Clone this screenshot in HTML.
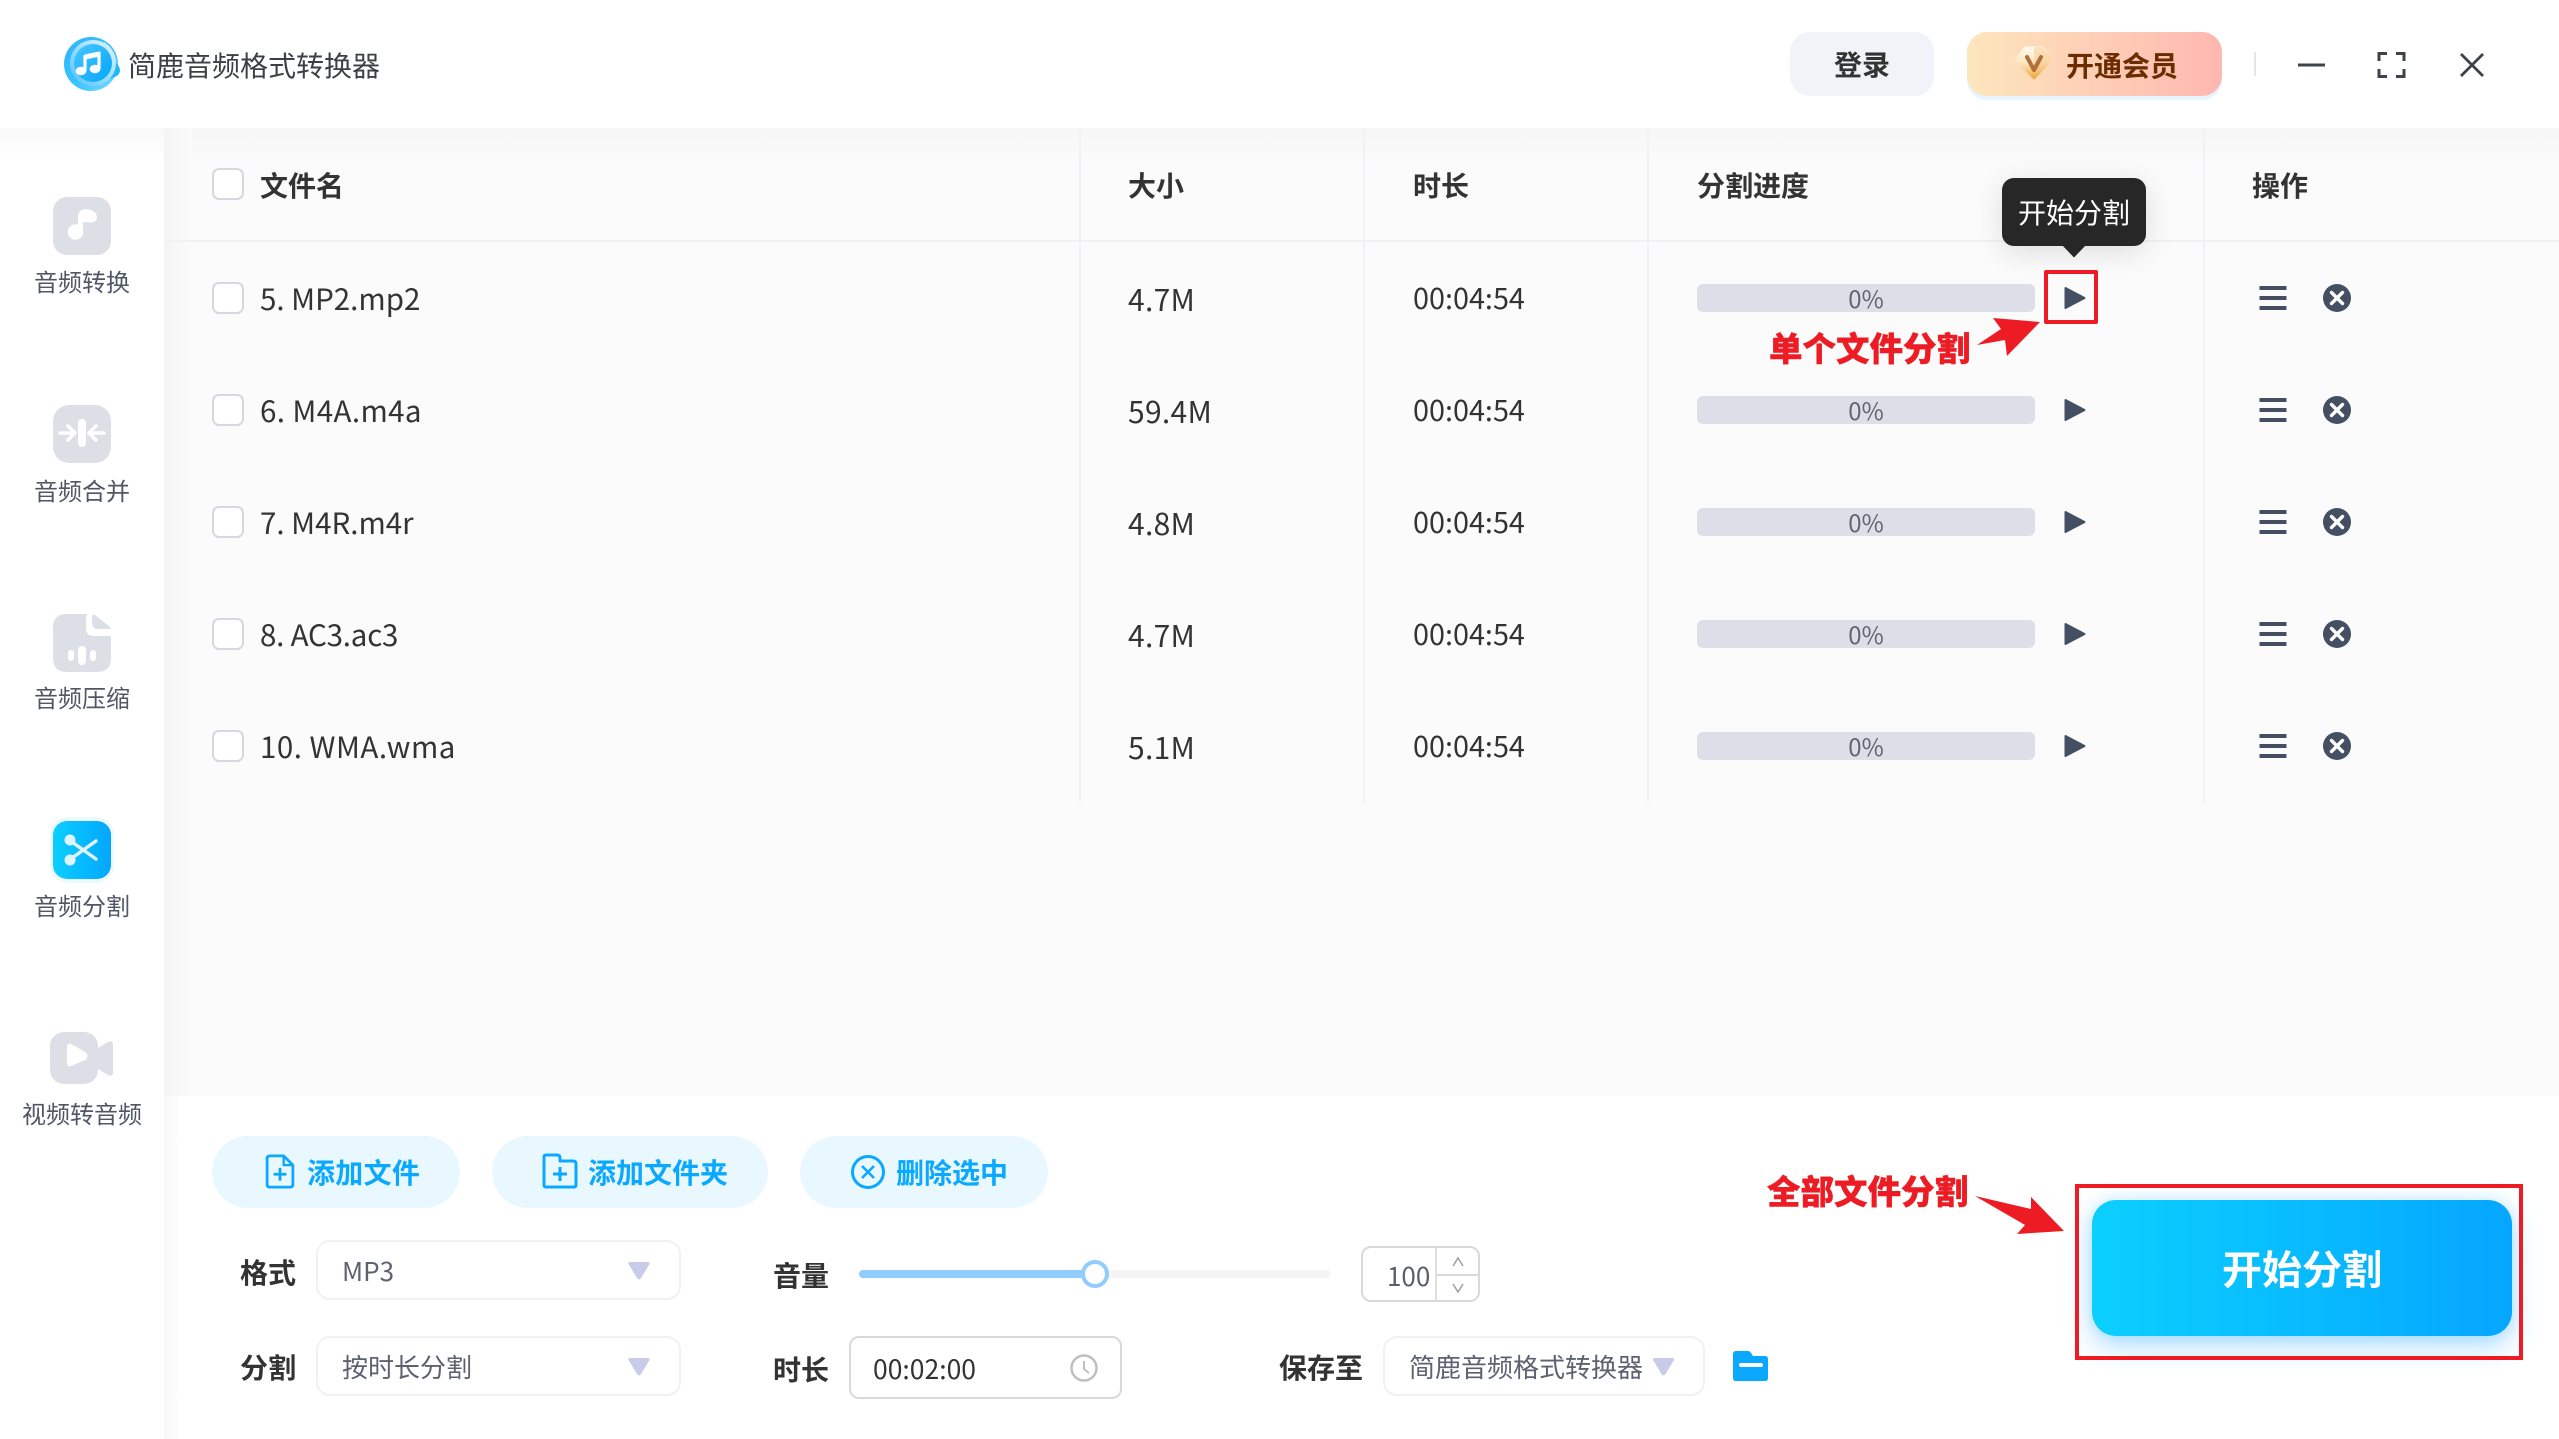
<!DOCTYPE html>
<html lang="zh">
<head>
<meta charset="utf-8">
<title>简鹿音频格式转换器</title>
<style>
html,body{margin:0;padding:0;width:2559px;height:1439px;overflow:hidden;background:#fff}
body{position:relative;font-family:"Noto Sans CJK SC","Liberation Sans",sans-serif;color:#333}
.a{position:absolute;white-space:nowrap}
.t{position:absolute;white-space:nowrap;line-height:40px;height:40px}
.fn{font-size:29.5px}.sz{font-size:30px}.tm{font-size:28.8px}
svg{position:absolute;overflow:visible}
.b{font-weight:700}
.cb{position:absolute;left:212px;width:32px;height:32px;box-sizing:border-box;border:2px solid #d5d8df;border-radius:7px;background:#fff}
.bar{position:absolute;left:1697px;width:338px;height:28px;background:#dcdfe7;border-radius:6px;text-align:center;font-size:24px;line-height:28px;color:#5f6672}
.vl{position:absolute;top:128px;width:2px;height:675px;background:#f1f2f5}
.nav{position:absolute;left:0;width:164px;text-align:center;font-size:24px;line-height:34px;color:#4f5766}
.pill{position:absolute;top:1136px;height:72px;border-radius:36px;background:#e9f8ff}
.pt{position:absolute;top:1152px;line-height:40px;font-size:28px;font-weight:700;color:#0aa8ff;white-space:nowrap}
.sel{position:absolute;box-sizing:border-box;border:2px solid #eff1f5;border-radius:14px;background:#fff;height:60px}
.seltxt{position:absolute;font-size:26px;line-height:40px;color:#5c6270;white-space:nowrap}
.lab{position:absolute;font-size:28px;font-weight:700;line-height:40px;white-space:nowrap;color:#333}
.red{position:absolute;font-size:33.500px;font-weight:900;line-height:40px;color:#ed1c24;white-space:nowrap;-webkit-text-stroke:.4px #ed1c24}
</style>
</head>
<body>
<!-- main background -->
<div class="a" style="left:164px;top:128px;width:2395px;height:968px;background:#fbfbfc"></div>
<div class="a" style="left:164px;top:128px;width:2395px;height:36px;background:linear-gradient(#f6f6f6,#fbfbfc)"></div>
<div class="a" style="left:164px;top:128px;width:28px;height:968px;background:linear-gradient(90deg,#f4f4f5,#fbfbfc)"></div>
<div class="a" style="left:0;top:128px;width:164px;height:30px;background:linear-gradient(#f8f8f8,#fff)"></div>
<div class="a" style="left:164px;top:1096px;width:2395px;height:343px;background:#fff"></div>
<div class="a" style="left:164px;top:1096px;width:16px;height:343px;background:linear-gradient(90deg,#f8f8f8,#fff)"></div>

<!-- header -->
<svg style="left:60px;top:32px" width="66" height="64" viewBox="60 32 66 64">
<defs>
<linearGradient id="lg" x1="0" y1="0" x2="1" y2="1"><stop offset="0" stop-color="#2fb4fb"/><stop offset=".55" stop-color="#37c4ff"/><stop offset="1" stop-color="#7fdcff"/></linearGradient>
<linearGradient id="lr" x1="1" y1="0" x2="0" y2="1"><stop offset="0" stop-color="#e9f7ff"/><stop offset="1" stop-color="#4fc2ff"/></linearGradient>
<linearGradient id="li" x1="0" y1="0" x2="1" y2="1"><stop offset="0" stop-color="#49c6ff"/><stop offset="1" stop-color="#02a6ff"/></linearGradient>
</defs>
<circle cx="91" cy="64" r="27" fill="url(#lg)"/>
<path d="M108 60q6 2 9 4 3 3 3 7-1 5-6 6l-6 3z" fill="#1cb8fb"/>
<path d="M104 42a27 27 0 0 1 12 18l-8 6z" fill="#dff3ff" opacity=".9"/>
<circle cx="93" cy="63" r="23" fill="url(#lr)"/>
<circle cx="93" cy="63" r="19" fill="url(#li)"/>
<path d="M85 70.500V56.500L99 53.500V68.500" fill="none" stroke="#fff" stroke-width="3.200"/>
<path d="M85 57 99 54" stroke="#fff" stroke-width="5"/>
<ellipse cx="81" cy="71" rx="5.400" ry="4.200" fill="#fff"/>
<ellipse cx="95" cy="69" rx="5.400" ry="4.200" fill="#fff"/>
</svg>
<div class="t" style="left:128px;top:45px;font-size:28px;color:#3c3f46">简鹿音频格式转换器</div>

<div class="a" style="left:1790px;top:32px;width:144px;height:64px;border-radius:20px;background:#f2f3f8;text-align:center;line-height:64px;font-size:28px;font-weight:700;color:#333">登录</div>
<div class="a" style="left:1967px;top:36px;width:255px;height:64px;border-radius:20px;background:#e6f4ff"></div>
<div class="a" style="left:1967px;top:32px;width:255px;height:64px;border-radius:20px;background:linear-gradient(90deg,#fde6bd,#ffb7b0)"></div>
<svg style="left:2015px;top:46px" width="38" height="34" viewBox="0 0 38 34">
<defs><linearGradient id="dm" x1="0" y1="0" x2="0" y2="1"><stop offset="0" stop-color="#fffaf0"/><stop offset=".5" stop-color="#fde7bf"/><stop offset="1" stop-color="#efa53a"/></linearGradient></defs>
<path d="M10 1H28L38 14 19 33 0 14Z" fill="url(#dm)" stroke="url(#dm)" stroke-width="1" stroke-linejoin="round"/>
<path d="M19 1H28L38 14 19 33Z" fill="#f2b468" opacity=".35"/>
<path d="M12 11 19 24 26 11" fill="none" stroke="#b0703a" stroke-width="4" stroke-linecap="round" stroke-linejoin="round"/>
</svg>
<div class="t" style="left:2066px;top:45px;font-size:28px;font-weight:700;color:#6b2d00">开通会员</div>
<div class="a" style="left:2254px;top:52px;width:2px;height:24px;background:#e4e5e8"></div>
<svg style="left:2290px;top:44px" width="210" height="44" viewBox="2290 44 210 44" fill="none" stroke="#3e424a" stroke-width="3">
<path d="M2298 65H2325"/>
<path d="M2387 53.500H2379V61M2396 53.500H2404V61M2379 69V76.500H2387M2404 69V76.500H2396"/>
<path d="M2461 54 2483 76M2483 54 2461 76" stroke-width="2.800"/>
</svg>

<!-- sidebar -->
<svg style="left:50px;top:190px" width="70" height="70" viewBox="50 190 70 70">
<rect x="53" y="197" width="58" height="58" rx="14" fill="#dcdfe6"/>
<circle cx="75.500" cy="232" r="7.800" fill="#fff"/>
<path d="M80.500 232V216" stroke="#fff" stroke-width="5"/>
<path d="M78 216Q79 209 86 209 96 210 97 217 97 222 91 222.500L83 222Z" fill="#fff"/>
</svg>
<div class="nav" style="top:264px">音频转换</div>

<svg style="left:50px;top:400px" width="70" height="70" viewBox="50 400 70 70">
<rect x="53" y="405" width="58" height="58" rx="16" fill="#dcdfe6"/>
<rect x="78" y="419" width="8" height="28" rx="4" fill="#fff"/>
<path d="M60 433H72M68 426l7 7-7 7" fill="none" stroke="#fff" stroke-width="3.500" stroke-linecap="round" stroke-linejoin="round"/>
<path d="M104 433H92M96 426l-7 7 7 7" fill="none" stroke="#fff" stroke-width="3.500" stroke-linecap="round" stroke-linejoin="round"/>
</svg>
<div class="nav" style="top:473px">音频合并</div>

<svg style="left:50px;top:610px" width="70" height="70" viewBox="50 610 70 70">
<path d="M67 614H88Q86 614 86 620V628Q86 636 94 636H111V658Q111 672 97 672H67Q53 672 53 658V628Q53 614 67 614Z" fill="#dcdfe6"/>
<path d="M92 615q1-1 3 0l15 12q2 2-1 2H98q-6 0-6-6z" fill="#dcdfe6"/>
<rect x="68" y="650" width="6" height="11" rx="3" fill="#fff"/>
<rect x="78" y="646" width="8" height="19" rx="4" fill="#fff"/>
<rect x="90" y="650" width="6" height="11" rx="3" fill="#fff"/>
</svg>
<div class="nav" style="top:680px">音频压缩</div>

<div class="a" style="left:50px;top:817px;width:64px;height:66px;border-radius:18px;background:#eef9ff"></div>
<svg style="left:50px;top:815px" width="70" height="70" viewBox="50 815 70 70">
<defs><linearGradient id="sc" x1="0" y1="0" x2="1" y2="0"><stop offset="0" stop-color="#0bcfff"/><stop offset="1" stop-color="#03a6ff"/></linearGradient></defs>
<rect x="53" y="821" width="58" height="58" rx="14" fill="url(#sc)"/>
<circle cx="70" cy="840" r="5.500" fill="#dff4ff"/>
<circle cx="70" cy="860" r="5.500" fill="#dff4ff"/>
<path d="M72 842 96 859M72 858 96 841" stroke="#dff4ff" stroke-width="3.500" stroke-linecap="round"/>
</svg>
<div class="nav" style="top:888px">音频分割</div>

<svg style="left:45px;top:1028px" width="75" height="60" viewBox="45 1028 75 60">
<rect x="50" y="1032" width="48" height="52" rx="14" fill="#dcdfe6"/>
<path d="M98 1048l10-6q5-2 5 3v27q0 5-5 3l-10-6z" fill="#dcdfe6"/>
<path d="M68 1047q0-3 3-2l14 8q3 3 0 6l-14 6q-3 1-3-2z" fill="#fff" stroke="#fff" stroke-width="2" stroke-linejoin="round"/>
</svg>
<div class="nav" style="top:1096px">视频转音频</div>

<!-- table -->
<div class="a" style="left:164px;top:240px;width:2395px;height:2px;background:#f0f2f6"></div>
<div class="vl" style="left:1079px"></div>
<div class="vl" style="left:1363px"></div>
<div class="vl" style="left:1647px"></div>
<div class="vl" style="left:2203px"></div>

<div class="cb" style="top:168px"></div>
<div class="t b" style="left:260px;top:165px;font-size:28px">文件名</div>
<div class="t b" style="left:1128px;top:165px;font-size:28px">大小</div>
<div class="t b" style="left:1413px;top:165px;font-size:28px">时长</div>
<div class="t b" style="left:1697px;top:165px;font-size:28px">分割进度</div>
<div class="t b" style="left:2252px;top:165px;font-size:28px">操作</div>

<!-- rows -->
<div class="cb" style="top:282px"></div>
<div class="t fn" style="left:260px;top:278px">5. MP2.mp2</div>
<div class="t sz" style="left:1128px;top:278px;letter-spacing:.3px">4.7M</div>
<div class="t tm" style="left:1413px;top:278px">00:04:54</div>
<div class="bar" style="top:284px">0%</div>

<div class="cb" style="top:394px"></div>
<div class="t fn" style="left:260px;top:390px;letter-spacing:.4px">6. M4A.m4a</div>
<div class="t sz" style="left:1128px;top:390px;letter-spacing:.3px">59.4M</div>
<div class="t tm" style="left:1413px;top:390px">00:04:54</div>
<div class="bar" style="top:396px">0%</div>

<div class="cb" style="top:506px"></div>
<div class="t fn" style="left:260px;top:502px">7. M4R.m4r</div>
<div class="t sz" style="left:1128px;top:502px;letter-spacing:.3px">4.8M</div>
<div class="t tm" style="left:1413px;top:502px">00:04:54</div>
<div class="bar" style="top:508px">0%</div>

<div class="cb" style="top:618px"></div>
<div class="t fn" style="left:260px;top:614px;letter-spacing:-.2px">8. AC3.ac3</div>
<div class="t sz" style="left:1128px;top:614px;letter-spacing:.3px">4.7M</div>
<div class="t tm" style="left:1413px;top:614px">00:04:54</div>
<div class="bar" style="top:620px">0%</div>

<div class="cb" style="top:730px"></div>
<div class="t fn" style="left:260px;top:726px;letter-spacing:.5px">10. WMA.wma</div>
<div class="t sz" style="left:1128px;top:726px;letter-spacing:.3px">5.1M</div>
<div class="t tm" style="left:1413px;top:726px">00:04:54</div>
<div class="bar" style="top:732px">0%</div>

<svg style="left:0;top:0" width="2559" height="1439" viewBox="0 0 2559 1439">
<defs>
<g id="acts">
<path d="M2065.500 288 2084.500 298 2065.500 308Z" fill="#454f63" stroke="#454f63" stroke-width="2" stroke-linejoin="round"/>
<path d="M2259.500 288H2286.500M2259.500 298H2286.500M2259.500 308H2286.500" stroke="#454f63" stroke-width="4"/>
<circle cx="2337" cy="298" r="14" fill="#454f63"/>
<path d="M2331.500 292.500 2342.500 303.500M2342.500 292.500 2331.500 303.500" stroke="#fff" stroke-width="3.400" stroke-linecap="round"/>
</g>
</defs>
<use href="#acts"/>
<use href="#acts" y="112"/>
<use href="#acts" y="224"/>
<use href="#acts" y="336"/>
<use href="#acts" y="448"/>
</svg>

<!-- tooltip -->
<div class="a" style="left:2002px;top:178px;width:144px;height:68px;border-radius:12px;background:#272727;color:#fff;text-align:center;line-height:68px;font-size:28px;box-shadow:0 6px 30px rgba(0,0,0,.12)">开始分割</div>
<svg style="left:2060px;top:245px" width="28" height="14" viewBox="0 0 28 14"><path d="M2 0H26L15 11.500Q14 13 13 11.500Z" fill="#272727"/></svg>

<!-- annotation 1 -->
<div class="a" style="left:2044px;top:270px;width:54px;height:54px;box-sizing:border-box;border:4px solid #ed1c24;border-radius:2px"></div>
<div class="red" style="left:1769px;top:327px">单个文件分割</div>
<svg style="left:0;top:0" width="2559" height="1439" viewBox="0 0 2559 1439">
<path d="M2040 322 1993 318 2001 329 1977 345 2005 340 2007 356Z" fill="#ed1c24"/>
<path d="M1975 1196 2031 1209 2031 1197 2064 1231 2017 1234 2025 1225Z" fill="#ed1c24"/>
</svg>

<!-- buttons -->
<div class="pill" style="left:212px;width:248px"></div>
<svg style="left:264px;top:1154px" width="32" height="35" viewBox="0 0 32 38" fill="none" stroke="#0aa8ff" stroke-width="3">
<path d="M5 2H20L30 12V33Q30 36 27 36H5Q2 36 2 33V5Q2 2 5 2Z" stroke-linejoin="round"/>
<path d="M20 2V12H30" stroke-width="2.500"/>
<path d="M16 15V29M9 22H23"/>
</svg>
<div class="pt" style="left:307px;letter-spacing:.3px">添加文件</div>

<div class="pill" style="left:492px;width:276px"></div>
<svg style="left:542px;top:1153px" width="36" height="36" viewBox="0 0 36 36" fill="none" stroke="#0aa8ff" stroke-width="3">
<path d="M2 32V4Q2 2 4 2H15Q18 2 18 5V8H31Q34 8 34 11V32Q34 34 32 34H4Q2 34 2 32Z" stroke-linejoin="round"/>
<path d="M18 14V28M11 21H25"/>
</svg>
<div class="pt" style="left:588px">添加文件夹</div>

<div class="pill" style="left:800px;width:248px"></div>
<svg style="left:851px;top:1155px" width="36" height="36" viewBox="0 0 36 36" fill="none" stroke="#0aa8ff" stroke-width="3">
<circle cx="17" cy="17" r="15.500"/>
<path d="M11 11 23 23M23 11 11 23" stroke-width="2.600"/>
</svg>
<div class="pt" style="left:896px">删除选中</div>

<!-- form -->
<div class="lab" style="left:240px;top:1252px">格式</div>
<div class="sel" style="left:316px;top:1240px;width:365px"></div>
<div class="seltxt" style="left:342px;top:1251px;color:#5c6270">MP3</div>
<svg style="left:628px;top:1262px" width="22" height="18" viewBox="0 0 22 18"><path d="M2 0H20Q22 0 21.500 2L13 16Q11 19 9 16L.5 2Q0 0 2 0Z" fill="#c9cce8"/></svg>

<div class="lab" style="left:240px;top:1347px">分割</div>
<div class="sel" style="left:316px;top:1336px;width:365px"></div>
<div class="seltxt" style="left:342px;top:1347px">按时长分割</div>
<svg style="left:628px;top:1358px" width="22" height="18" viewBox="0 0 22 18"><path d="M2 0H20Q22 0 21.500 2L13 16Q11 19 9 16L.5 2Q0 0 2 0Z" fill="#c9cce8"/></svg>

<div class="lab" style="left:773px;top:1255px">音量</div>
<div class="a" style="left:859px;top:1270px;width:472px;height:8px;border-radius:4px;background:#f5f5f5"></div>
<div class="a" style="left:859px;top:1270px;width:236px;height:8px;border-radius:4px;background:#91ccff"></div>
<div class="a" style="left:1081px;top:1260px;width:28px;height:28px;box-sizing:border-box;border:4px solid #91ccff;border-radius:50%;background:#fff"></div>

<div class="a" style="left:1361px;top:1246px;width:119px;height:56px;box-sizing:border-box;border:2px solid #d9d9d9;border-radius:10px;background:#fff"></div>
<div class="a" style="left:1435px;top:1247px;width:2px;height:54px;background:#e0e0e0"></div>
<div class="a" style="left:1436px;top:1274px;width:43px;height:2px;background:#d9d9d9"></div>
<div class="a" style="left:1387px;top:1256px;font-size:26px;line-height:40px;color:#595e68">100</div>
<svg style="left:1450px;top:1254px" width="16" height="42" viewBox="0 0 16 42" fill="none" stroke="#9a9ea6" stroke-width="1.500"><path d="M3 12 8 4 13 12M3 30 8 38 13 30"/></svg>

<div class="lab" style="left:773px;top:1349px">时长</div>
<div class="a" style="left:849px;top:1336px;width:273px;height:63px;box-sizing:border-box;border:2px solid #d9d9d9;border-radius:10px;background:#fff"></div>
<div class="a" style="left:873px;top:1348px;font-size:26.500px;line-height:40px;color:#333">00:02:00</div>
<svg style="left:1070px;top:1354px" width="28" height="28" viewBox="0 0 28 28" fill="none" stroke="#bfbfbf" stroke-width="2.500"><circle cx="14" cy="14" r="12.500"/><path d="M14 7V15L19 19" stroke-width="2"/></svg>

<div class="lab" style="left:1279px;top:1347px">保存至</div>
<div class="sel" style="left:1383px;top:1336px;width:322px"></div>
<div class="seltxt" style="left:1409px;top:1347px">简鹿音频格式转换器</div>
<svg style="left:1652px;top:1358px" width="23" height="18" viewBox="0 0 22 18"><path d="M2 0H20Q22 0 21.500 2L13 16Q11 19 9 16L.5 2Q0 0 2 0Z" fill="#c9cce8"/></svg>
<svg style="left:1733px;top:1350px" width="36" height="32" viewBox="0 0 36 32">
<path d="M3 1H15Q17 1 18 3L20 6H32Q35 6 35 9V28Q35 31 32 31H3Q0 31 0 28V4Q0 1 3 1Z" fill="#0aa8ff"/>
<rect x="6" y="13" width="24" height="4" rx="2" fill="#fff"/>
</svg>

<!-- start button -->
<div class="a" style="left:2092px;top:1200px;width:420px;height:136px;border-radius:24px;background:linear-gradient(90deg,#0bd0ff,#05a6ff);box-shadow:0 10px 28px rgba(40,170,255,.38),0 0 14px rgba(90,190,255,.2);color:#fff;text-align:center;line-height:134px;font-size:40px;font-weight:700">开始分割</div>
<div class="a" style="left:2075px;top:1184px;width:448px;height:176px;box-sizing:border-box;border:4px solid #ed1c24"></div>
<div class="red" style="left:1767px;top:1170px">全部文件分割</div>
</body>
</html>
